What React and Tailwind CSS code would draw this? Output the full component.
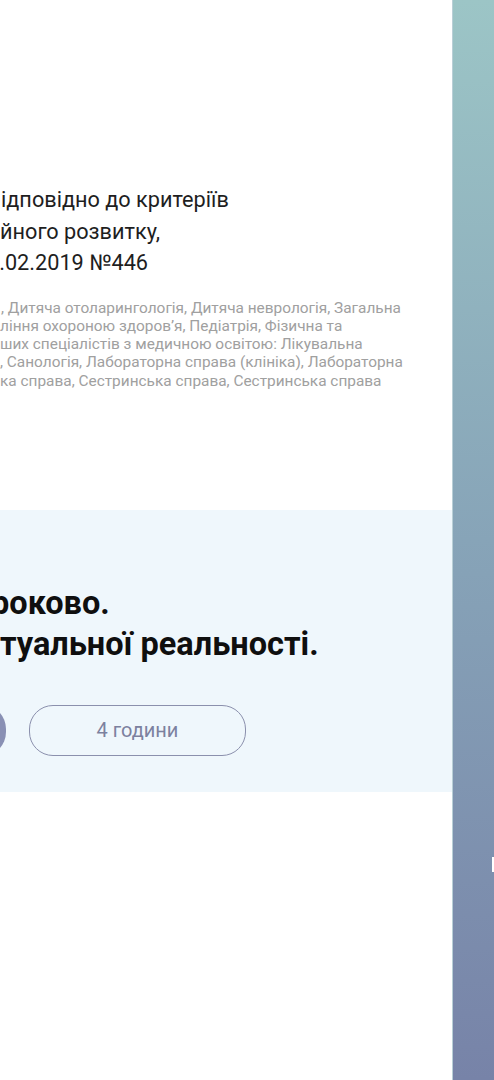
export default function App() {
  return (
    <div className="flex h-[1080px] w-[494px] overflow-hidden bg-white font-['Roboto',sans-serif]">
      <div className="flex w-[452px] shrink-0 flex-col overflow-hidden">
        <div className="h-[184px]" />
        <div className="text-[21.7px] leading-[31.5px] text-[#1e1e1e] whitespace-nowrap">
          <div className="ml-[1px]">ідповідно до критеріїв</div>
          <div>йного розвитку,</div>
          <div className="ml-[-13px]">2.02.2019 №446</div>
        </div>
        <div className="mt-[20px] text-[15.4px] leading-[18.3px] text-[#a0a0a0] whitespace-nowrap">
          <div className="ml-[1px]">, Дитяча отоларингологія, Дитяча неврологія, Загальна</div>
          <div>ління охороною здоров’я, Педіатрія, Фізична та</div>
          <div>ших спеціалістів з медичною освітою: Лікувальна</div>
          <div>, Санологія, Лабораторна справа (клініка), Лабораторна</div>
          <div>ка справа, Сестринська справа, Сестринська справа</div>
        </div>
        <div className="h-[120px]" />
        <section className="h-[282px] bg-[#eff7fc] pt-[73px]">
          <h2 className="text-[32.5px] font-bold leading-[41px] text-[#0f0f0f] whitespace-nowrap">
            <div className="ml-[-9px]">роково.</div>
            <div>туальної реальності.</div>
          </h2>
          <div className="mt-[40px] flex items-center gap-[23px] ml-[-154px]">
            <div className="h-[51px] w-[160px] rounded-[24px] bg-[#8990b4]" />
            <div className="flex h-[51px] w-[217px] items-center justify-center rounded-[24px] border border-[#8b90ad] text-[20px] text-[#7c819f]">
              4 години
            </div>
          </div>
        </section>
        <div className="flex-1 bg-white" />
      </div>
      <div className="flex flex-1 flex-col border-l border-[#b9cfd6] bg-linear-to-b from-[#9cc5c6] via-[#87a4b8] to-[#7783a8]">
        <div className="h-[857px]" />
        <div className="ml-auto h-[15px] w-[2px] bg-white" />
      </div>
    </div>
  );
}
